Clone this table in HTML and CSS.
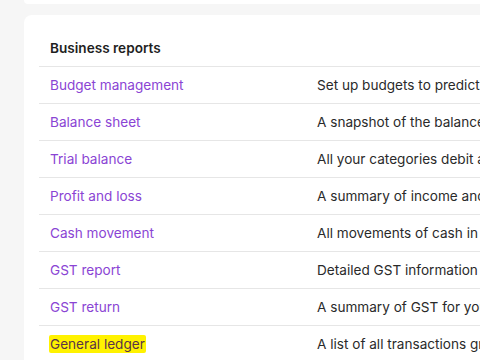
FILE: index.html
```html
<!DOCTYPE html>
<html>
<head>
<meta charset="utf-8">
<link rel="stylesheet" href="styles.css">
</head>
<body>
<div class="page">
  <div class="top-card"></div>
  <section class="card">
    <h2 class="card-title">Business reports</h2>
    <div class="rows">
      <div class="row"><a class="name">Budget management</a><span class="desc">Set up budgets to predict and track your business performance</span></div>
      <div class="row"><a class="name">Balance sheet</a><span class="desc">A snapshot of the balance of your accounts</span></div>
      <div class="row"><a class="name">Trial balance</a><span class="desc">All your categories debit and credit balances</span></div>
      <div class="row"><a class="name">Profit and loss</a><span class="desc">A summary of income and expenses</span></div>
      <div class="row"><a class="name">Cash movement</a><span class="desc">All movements of cash in and out</span></div>
      <div class="row"><a class="name">GST report</a><span class="desc">Detailed GST information for your transactions</span></div>
      <div class="row"><a class="name">GST return</a><span class="desc">A summary of GST for your return</span></div>
      <div class="row"><a class="name"><mark class="hl">General ledger</mark></a><span class="desc">A list of all transactions grouped by category</span></div>
    </div>
  </section>
</div>
</body>
</html>
```
FILE: styles.css
```css
html, body {
  margin: 0;
  padding: 0;
  background: #f6f6f6;
  font-family: Inter, "Noto Sans", sans-serif;
  font-size: 13.6px;
  overflow: hidden;
}
.page {
  padding-left: 24px;
  width: 520px;
}
.top-card {
  height: 4px;
  background: #fff;
  border-radius: 0 0 8px 8px;
  margin-bottom: 11px;
}
.card {
  background: #fff;
  border-radius: 8px 0 0 8px;
  padding: 0 0 20px 15px;
  white-space: nowrap;
  overflow: hidden;
}
.card-title {
  margin: 0;
  padding: 25px 0 10px 11px;
  font-size: 13.6px;
  line-height: 16px;
  font-weight: 600;
  color: #1f1f1f;
}
.row {
  display: grid;
  grid-template-columns: 278px 1fr;
  align-items: center;
  height: 36px;
  border-top: 1px solid #e6e6e6;
}
.name {
  padding-left: 11px;
  color: #8a44d4;
  line-height: 16px;
}
.desc {
  color: #2a2a2a;
  line-height: 16px;
}
.hl {
  background: #fff200;
  color: #5a3448;
  padding: 1px 1px;
  margin-left: -1px;
  border-radius: 2px;
}
```
